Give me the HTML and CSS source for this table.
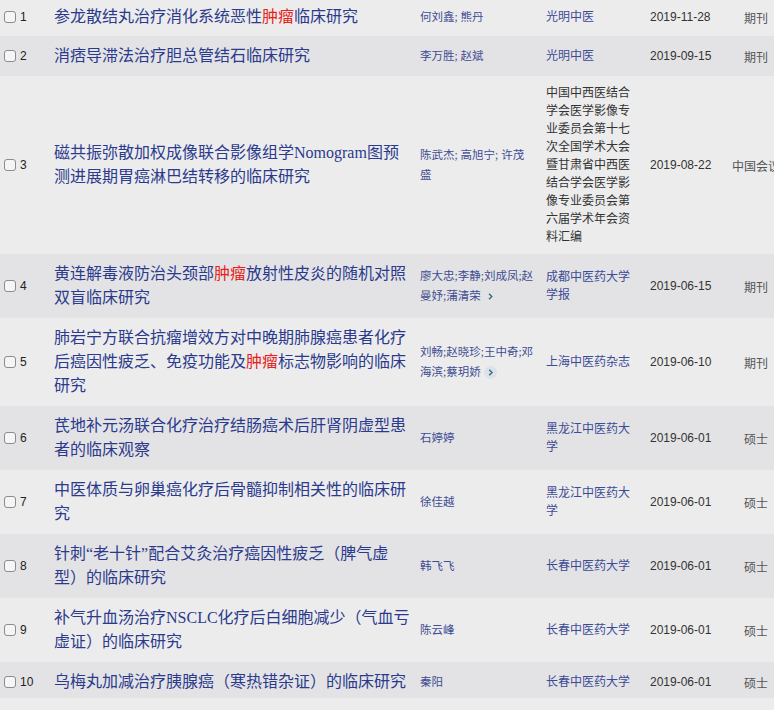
FILE: index.html
```html
<!DOCTYPE html>
<html lang="zh-CN">
<head>
<meta charset="utf-8">
<title>检索结果</title>
<link rel="stylesheet" href="styles.css">
</head>
<body>
<div class="wrap">
<table class="results">
  <colgroup>
    <col class="c-sel"><col class="c-title"><col class="c-author"><col class="c-src"><col class="c-date"><col class="c-type">
  </colgroup>
  <tbody>
    <tr class="odd first">
      <td class="sel"><input type="checkbox" class="cb"><span class="num">1</span></td>
      <td class="title"><a>参龙散结丸治疗消化系统恶性<em>肿瘤</em>临床研究</a></td>
      <td class="author">何刘鑫; 熊丹</td>
      <td class="src link">光明中医</td>
      <td class="date">2019-11-28</td>
      <td class="type">期刊</td>
    </tr>
    <tr class="even">
      <td class="sel"><input type="checkbox" class="cb"><span class="num">2</span></td>
      <td class="title"><a>消痞导滞法治疗胆总管结石临床研究</a></td>
      <td class="author">李万胜; 赵斌</td>
      <td class="src link">光明中医</td>
      <td class="date">2019-09-15</td>
      <td class="type">期刊</td>
    </tr>
    <tr class="odd">
      <td class="sel"><input type="checkbox" class="cb"><span class="num">3</span></td>
      <td class="title"><a>磁共振弥散加权成像联合影像组学Nomogram图预测进展期胃癌淋巴结转移的临床研究</a></td>
      <td class="author">陈武杰; 高旭宁; 许茂<br>盛</td>
      <td class="src plain">中国中西医结合学会医学影像专业委员会第十七次全国学术大会暨甘肃省中西医结合学会医学影像专业委员会第六届学术年会资料汇编</td>
      <td class="date">2019-08-22</td>
      <td class="type">中国会议</td>
    </tr>
    <tr class="even">
      <td class="sel"><input type="checkbox" class="cb"><span class="num">4</span></td>
      <td class="title"><a>黄连解毒液防治头颈部<em>肿瘤</em>放射性皮炎的随机对照双盲临床研究</a></td>
      <td class="author">廖大忠;李静;刘成凤;赵<br>曼妤;蒲清荣<span class="more"><svg width="13" height="13" viewBox="0 0 13 13"><path d="M5 3.8 L7.8 6.5 L5 9.2" fill="none" stroke="#2f6f86" stroke-width="1.4"/></svg></span></td>
      <td class="src link">成都中医药大学学报</td>
      <td class="date">2019-06-15</td>
      <td class="type">期刊</td>
    </tr>
    <tr class="odd">
      <td class="sel"><input type="checkbox" class="cb"><span class="num">5</span></td>
      <td class="title"><a>肺岩宁方联合抗瘤增效方对中晚期肺腺癌患者化疗后癌因性疲乏、免疫功能及<em>肿瘤</em>标志物影响的临床研究</a></td>
      <td class="author">刘畅;赵晓珍;王中奇;邓<br>海滨;蔡玥娇<span class="more"><svg width="13" height="13" viewBox="0 0 13 13"><circle cx="6.5" cy="6.5" r="6.5" fill="#dde2e8"/><path d="M5.2 3.8 L8 6.5 L5.2 9.2" fill="none" stroke="#2f6f86" stroke-width="1.4"/></svg></span></td>
      <td class="src link">上海中医药杂志</td>
      <td class="date">2019-06-10</td>
      <td class="type">期刊</td>
    </tr>
    <tr class="even">
      <td class="sel"><input type="checkbox" class="cb"><span class="num">6</span></td>
      <td class="title"><a>芪地补元汤联合化疗治疗结肠癌术后肝肾阴虚型患者的临床观察</a></td>
      <td class="author">石婷婷</td>
      <td class="src link">黑龙江中医药大学</td>
      <td class="date">2019-06-01</td>
      <td class="type">硕士</td>
    </tr>
    <tr class="odd">
      <td class="sel"><input type="checkbox" class="cb"><span class="num">7</span></td>
      <td class="title"><a>中医体质与卵巢癌化疗后骨髓抑制相关性的临床研究</a></td>
      <td class="author">徐佳越</td>
      <td class="src link">黑龙江中医药大学</td>
      <td class="date">2019-06-01</td>
      <td class="type">硕士</td>
    </tr>
    <tr class="even">
      <td class="sel"><input type="checkbox" class="cb"><span class="num">8</span></td>
      <td class="title"><a>针刺“老十针”配合艾灸治疗癌因性疲乏（脾气虚型）的临床研究</a></td>
      <td class="author">韩飞飞</td>
      <td class="src link">长春中医药大学</td>
      <td class="date">2019-06-01</td>
      <td class="type">硕士</td>
    </tr>
    <tr class="odd">
      <td class="sel"><input type="checkbox" class="cb"><span class="num">9</span></td>
      <td class="title"><a>补气升血汤治疗NSCLC化疗后白细胞减少（气血亏虚证）的临床研究</a></td>
      <td class="author">陈云峰</td>
      <td class="src link">长春中医药大学</td>
      <td class="date">2019-06-01</td>
      <td class="type">硕士</td>
    </tr>
    <tr class="even last">
      <td class="sel"><input type="checkbox" class="cb"><span class="num">10</span></td>
      <td class="title"><a>乌梅丸加减治疗胰腺癌（寒热错杂证）的临床研究</a></td>
      <td class="author">秦阳</td>
      <td class="src link">长春中医药大学</td>
      <td class="date">2019-06-01</td>
      <td class="type">硕士</td>
    </tr>
  </tbody>
</table>
</div>
</body>
</html>
```
FILE: styles.css
```css
html, body {
  margin: 0;
  padding: 0;
  background: #ececed;
  overflow: hidden;
}
.wrap {
  width: 774px;
  overflow: hidden;
}
.results {
  width: 784px;
  table-layout: fixed;
  border-collapse: collapse;
  border-spacing: 0;
}
.c-sel { width: 54px; }
.c-title { width: 366px; }
.c-author { width: 126px; }
.c-src { width: 104px; }
.c-date { width: 78px; }
.c-type { width: 56px; }

.results td {
  padding: 8px 0;
  vertical-align: middle;
}
.results tr.first td { padding-top: 5px; padding-bottom: 7px; }
.results tr.last td { padding-bottom: 4px; }
.odd { background: #ececed; }
.even { background: #e3e3e5; }

.sel {
  padding-left: 4px !important;
  white-space: nowrap;
  font-family: "Liberation Sans", Arial, sans-serif;
  font-size: 12px;
  color: #222;
}
.cb {
  -webkit-appearance: none;
  appearance: none;
  width: 12px;
  height: 12px;
  margin: 0;
  box-sizing: border-box;
  border: 1px solid #8c8c8e;
  border-radius: 3px;
  background: #f5f5f6;
  vertical-align: -2px;
}
.num {
  margin-left: 4px;
}

.title {
  padding-right: 10px !important;
  font-family: "Liberation Serif", "Noto Sans CJK SC", serif;
  font-size: 16px;
  line-height: 24px;
  color: #2b3a8c;
}
.title a { color: #2b3a8c; text-decoration: none; }
.title em { font-style: normal; color: #e3231c; }

.author {
  font-family: "Liberation Serif", "Noto Sans CJK SC", serif;
  font-size: 11.5px;
  line-height: 20px;
  color: #3e4c92;
  white-space: nowrap;
}
.more {
  display: inline-block;
  width: 13px;
  height: 13px;
  margin-left: 3px;
  vertical-align: -3px;
}
.more svg { display: block; }

.src {
  padding-right: 14px !important;
  font-family: "Liberation Serif", "Noto Sans CJK SC", serif;
  font-size: 12px;
  line-height: 18px;
}
.src.link { color: #3c4b95; }
.src.plain { color: #333; }

.date {
  font-family: "Liberation Sans", Arial, sans-serif;
  font-size: 12px;
  color: #333;
}
.type {
  text-align: center;
  font-family: "Noto Sans CJK SC", sans-serif;
  font-size: 12px;
  color: #555;
  white-space: nowrap;
}
```
